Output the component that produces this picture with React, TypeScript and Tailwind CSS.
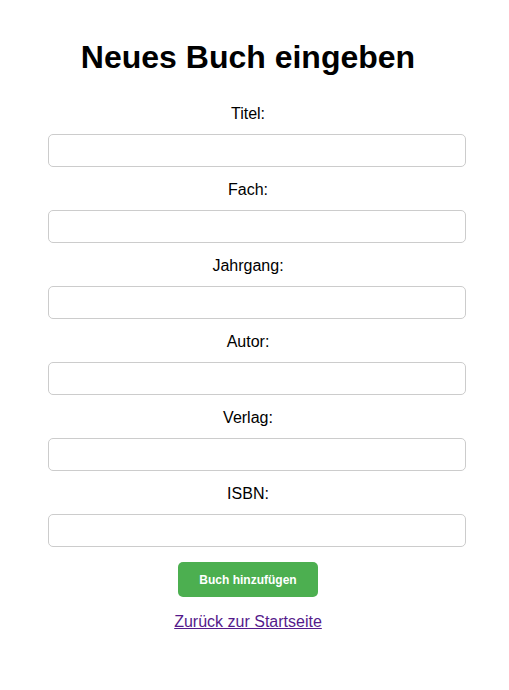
const fields = ['Titel:', 'Fach:', 'Jahrgang:', 'Autor:', 'Verlag:', 'ISBN:'];

export default function App() {
  return (
    <div className="min-h-screen bg-white font-['Liberation_Sans',Arial,sans-serif] text-black">
      <div className="ml-[48px] w-[400px] pt-[39px] text-center">
        <h1 className="text-[32px] font-bold leading-[37px]">Neues Buch eingeben</h1>

        <form className="mt-[29px] flex flex-col items-start">
          {fields.map((label, i) => (
            <div key={label} className={i === 0 ? 'w-full' : 'w-full mt-[14px]'}>
              <label className="block w-[400px] text-[16px] leading-[18px] text-center">{label}</label>
              <input
                type="text"
                className="mt-[11px] block h-[33px] w-[418px] rounded-[5px] border border-[#cccccc] bg-white px-2 text-[14px] outline-none"
              />
            </div>
          ))}

          <div className="mt-[15px] flex w-full justify-center">
            <button
              type="button"
              className="h-[35px] w-[140px] rounded-[5px] bg-[#4caf50] text-[12px] font-bold text-white"
            >
              Buch hinzufügen
            </button>
          </div>
        </form>

        <div className="mt-[16px] text-[16px] leading-[18px]">
          <a href="#" className="text-[#551a8b] underline">
            Zurück zur Startseite
          </a>
        </div>
      </div>
    </div>
  );
}
